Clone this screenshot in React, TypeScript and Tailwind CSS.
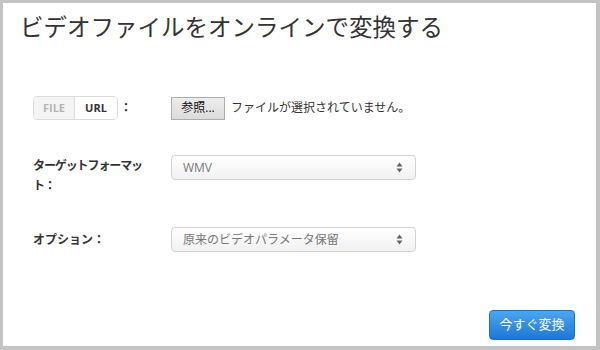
function SelectBox({ value }: { value: string }) {
  return (
    <div className="flex h-[25px] w-[245px] items-center justify-between rounded-[4px] border border-[#d2d2d2] bg-gradient-to-b from-white to-[#f1f1f1] pl-[11px] pr-[12px] text-[12px] text-[#777]">
      <span>{value}</span>
      <svg width="7" height="11" viewBox="0 0 7 11">
        <path d="M3.5 0.5 L6.5 4.5 L0.5 4.5 Z" fill="#666" />
        <path d="M3.5 10.5 L6.5 6.5 L0.5 6.5 Z" fill="#666" />
      </svg>
    </div>
  );
}

export default function App() {
  return (
    <div className="h-[350px] w-[600px] bg-[#c4c4c4] pb-[4px] pl-[3px] pr-[4px] pt-[3px] font-['Open_Sans','Noto_Sans_CJK_JP',sans-serif]">
      <div className="flex h-full flex-col bg-white">
        <h1 className="pl-[17px] pt-[9px] text-[23.5px] leading-[30px] text-[#333]">
          ビデオファイルをオンラインで変換する
        </h1>

        {/* source */}
        <div className="ml-[30px] mt-[54px] flex h-[24px] items-center">
          <div className="flex w-[138px] items-center">
            <div className="flex h-[24px] overflow-hidden rounded-[4px] border border-[#dcdcdc] text-[11px] font-bold">
              <span className="flex w-[40px] items-center justify-center bg-[#f4f4f4] text-[#b5b5b5]">FILE</span>
              <span className="flex w-[43px] items-center justify-center border-l border-[#dcdcdc] bg-white text-[#333]">URL</span>
            </div>
            <span className="ml-[2px] text-[12px] font-bold text-[#333]">：</span>
          </div>
          <button className="flex h-[23px] w-[54px] items-center justify-center border border-[#adadad] bg-gradient-to-b from-[#ececec] to-[#dcdcdc] text-[12px] text-[#111]">
            参照...
          </button>
          <span className="ml-[6px] text-[12px] text-[#333]">ファイルが選択されていません。</span>
        </div>

        {/* format */}
        <div className="ml-[30px] mt-[35px] flex items-start">
          <div className="w-[138px] pt-[1px] text-[12px] font-bold leading-[20px] tracking-[-1.1px] text-[#333]">
            ターゲットフォーマッ
            <br />
            ト：
          </div>
          <SelectBox value="WMV" />
        </div>

        {/* options */}
        <div className="ml-[30px] mt-[31px] flex items-center">
          <div className="w-[138px] text-[12px] font-bold text-[#333]">オプション：</div>
          <SelectBox value="原来のビデオパラメータ保留" />
        </div>

        <div className="mt-auto flex justify-end pb-[6px] pr-[21px]">
          <button className="flex h-[30px] w-[86px] items-center justify-center rounded-[4px] border border-[#1c70c4] bg-gradient-to-b from-[#4ba6f0] to-[#1a78d4] text-[13px] text-white">
            今すぐ変換
          </button>
        </div>
      </div>
    </div>
  );
}
